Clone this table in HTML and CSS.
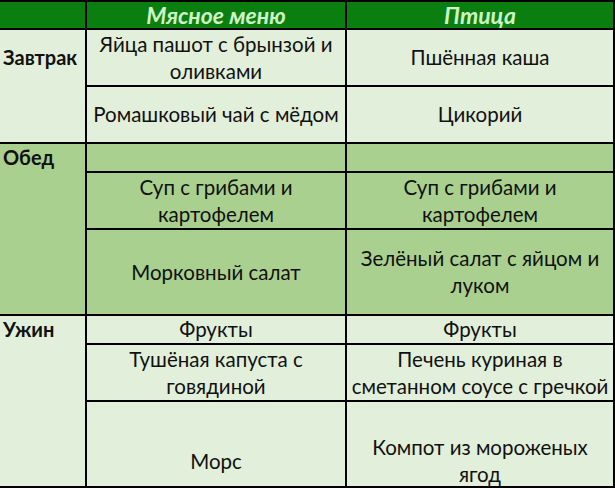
FILE: index.html
```html
<!DOCTYPE html>
<html lang="ru">
<head>
<meta charset="utf-8">
<title>Меню</title>
<link rel="stylesheet" href="styles.css">
</head>
<body>
<div class="sheet">
  <table class="menu">
    <colgroup>
      <col class="col-meal">
      <col class="col-meat">
      <col class="col-bird">
    </colgroup>
    <thead>
      <tr class="r1">
        <th class="corner"></th>
        <th>Мясное меню</th>
        <th>Птица</th>
      </tr>
    </thead>
    <tbody class="light">
      <tr class="r2">
        <td class="meal meal-pad" rowspan="2">Завтрак</td>
        <td>Яйца пашот с брынзой и<br>оливками</td>
        <td>Пшённая каша</td>
      </tr>
      <tr class="r2">
        <td>Ромашковый чай с мёдом</td>
        <td>Цикорий</td>
      </tr>
    </tbody>
    <tbody class="dark">
      <tr class="r1">
        <td class="meal" rowspan="3">Обед</td>
        <td></td>
        <td></td>
      </tr>
      <tr class="r2">
        <td>Суп с грибами и<br>картофелем</td>
        <td>Суп с грибами и<br>картофелем</td>
      </tr>
      <tr class="r3">
        <td>Морковный салат</td>
        <td>Зелёный салат с яйцом и<br>луком</td>
      </tr>
    </tbody>
    <tbody class="light">
      <tr class="r1">
        <td class="meal" rowspan="3">Ужин</td>
        <td>Фрукты</td>
        <td>Фрукты</td>
      </tr>
      <tr class="r2">
        <td>Тушёная капуста с<br>говядиной</td>
        <td>Печень куриная в<br>сметанном соусе с гречкой</td>
      </tr>
      <tr class="r4">
        <td>Морс</td>
        <td>Компот из мороженых<br>ягод</td>
      </tr>
    </tbody>
  </table>
</div>
</body>
</html>
```
FILE: styles.css
```css
html, body {
  margin: 0;
  padding: 0;
  background: #ffffff;
}

.sheet {
  width: 615px;
  height: 488px;
  box-sizing: border-box;
  overflow: hidden;
  border-bottom: 2px solid #000;
}

.menu {
  width: 614px;
  table-layout: fixed;
  border-collapse: collapse;
  font-family: "Lato", "Liberation Sans", sans-serif;
  font-size: 20.5px;
  line-height: 27px;
  color: #111;
  border-top: 2px solid #000;
  border-right: 2px solid #000;
}

.col-meal { width: 86px; }
.col-meat { width: 260px; }
.col-bird { width: 268px; }

.menu th,
.menu td {
  border: 2px solid #000;
  padding: 0 2px;
  text-align: center;
  vertical-align: middle;
  white-space: nowrap;
}

.menu th:first-child,
.menu td.meal {
  border-left: hidden;
}

.menu thead th {
  background: #0a7f10;
  color: #cdf3c6;
  font-style: italic;
  font-weight: 700;
  font-size: 23px;
  height: 26px;
  line-height: 26px;
}

.light td { background: #e2efda; }
.dark td { background: #a9d08e; }

.menu td.meal {
  text-align: left;
  vertical-align: top;
  font-weight: 700;
  font-size: 20px;
  padding-left: 3px;
}

.menu td.meal-pad {
  padding-top: 14px;
}

.r1 td { height: 27px; }
.r2 td { height: 55px; }
.r3 td { height: 84px; }
.r4 td { height: 118px; }
```
